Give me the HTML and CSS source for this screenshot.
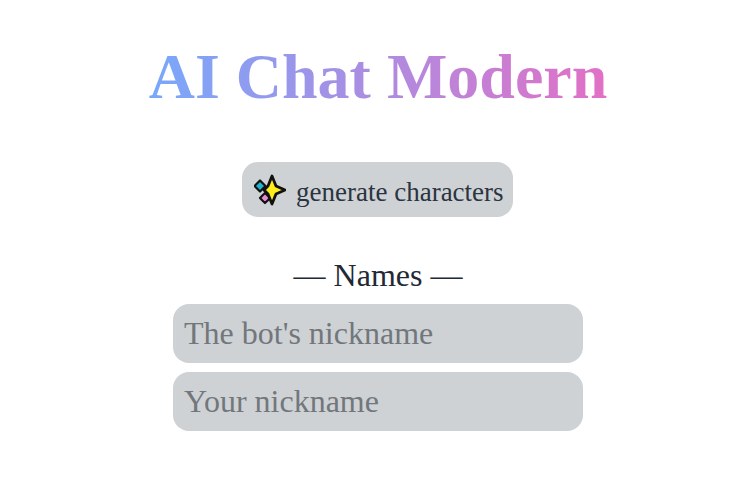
FILE: index.html
```html
<!DOCTYPE html>
<html lang="en">
<head>
  <meta charset="UTF-8" />
  <meta name="viewport" content="width=device-width, initial-scale=1.0"/>
  <title>AI Chat Modern</title>
  <link rel="stylesheet" href="styles.css">
</head>
<body>

<div class="app">
  <h1 class="title">AI Chat Modern</h1>

  <button class="generate">
    <svg class="sparkles" viewBox="0 0 32 32" width="32" height="32" aria-hidden="true">
      <path d="M6 6.5 L9 9.5 L11.5 12 L9 14.5 L6 17.5 L3 14.5 L.5 12 L3 9.5 Z" fill="#1fb5cf" stroke="#111" stroke-width="2.2" stroke-linejoin="round"/>
      <path d="M11 19 L13.6 21.5 L16 24 L13.6 26.5 L11 29 L8.4 26.5 L6 24 L8.4 21.5 Z" fill="#e58bd0" stroke="#111" stroke-width="2.2" stroke-linejoin="round"/>
      <path d="M18 2 L22 12 L31 16 L22 20 L18 30 L14 20 L10 16 L14 12 Z" fill="#ffee1a" stroke="#111" stroke-width="2.8" stroke-linejoin="round"/>
    </svg>
    <span>generate characters</span>
  </button>

  <div class="names-label">— Names —</div>
  <input class="name-input" type="text" placeholder="The bot's nickname">
  <input class="name-input" type="text" placeholder="Your nickname">
</div>

</body>
</html>
```

FILE: styles.css
```css
body {
  margin: 0;
  background: #fff;
  font-family: "Liberation Serif", serif;
  color: #2b3440;
}

.app {
  display: flex;
  flex-direction: column;
  align-items: center;
  padding: 41px 0 0 6px;
}

.title {
  margin: 0 0 50px;
  font-size: 64px;
  line-height: 71px;
  font-weight: bold;
  background: linear-gradient(90deg, #78a8fb, #e270c6);
  -webkit-background-clip: text;
  background-clip: text;
  color: transparent;
}

.generate {
  display: flex;
  align-items: center;
  gap: 10px;
  width: 271px;
  height: 55px;
  margin-right: 1px;
  padding: 6px 0 0 12px;
  border: none;
  border-radius: 16px;
  background: #ced2d5;
  font-family: inherit;
  font-size: 27px;
  color: #2b3440;
  cursor: pointer;
}

.sparkles {
  flex: none;
  margin-top: -6px;
}

.names-label {
  margin-top: 40px;
  margin-bottom: 10px;
  font-size: 32px;
  line-height: 37px;
  color: #212935;
}

.name-input {
  box-sizing: border-box;
  width: 410px;
  height: 59px;
  margin-bottom: 9px;
  padding: 0 11px 1px;
  border: none;
  border-radius: 16px;
  background: #ced2d5;
  font-family: inherit;
  font-size: 32px;
  color: #2b3440;
}

.name-input::placeholder {
  color: #72777c;
}
```
